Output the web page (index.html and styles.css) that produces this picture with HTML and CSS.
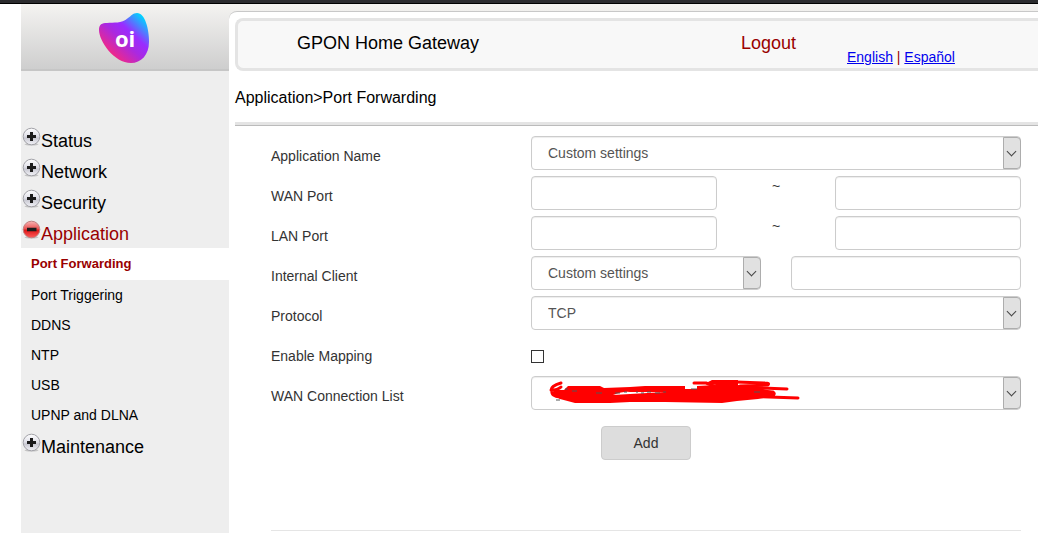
FILE: index.html
```html
<!DOCTYPE html>
<html lang="en">
<head>
    <meta charset="utf-8">
    <meta name="viewport" content="width=device-width, initial-scale=1">
    <title>GPON Home Gateway</title>
    <link rel="stylesheet" href="styles.css">
</head>
<body>

    <!-- shared icons -->
    <svg class="defs" width="0" height="0" aria-hidden="true">
        <defs>
            <linearGradient id="grey" x1="0" y1="0" x2="0" y2="1">
                <stop offset="0" stop-color="#fff"/>
                <stop offset="0.45" stop-color="#e2e2ea"/>
                <stop offset="0.6" stop-color="#c9c9d2"/>
                <stop offset="1" stop-color="#f5f5fa"/>
            </linearGradient>
            <linearGradient id="red" x1="0" y1="0" x2="0" y2="1">
                <stop offset="0" stop-color="#f9b5b5"/>
                <stop offset="0.45" stop-color="#ea5555"/>
                <stop offset="0.55" stop-color="#dd1a1a"/>
                <stop offset="1" stop-color="#ff5c5c"/>
            </linearGradient>
            <symbol id="plus" viewBox="0 0 19 19">
                <ellipse cx="9.5" cy="17.300" rx="7" ry="1.200" fill="#c4c4c4"/>
                <circle cx="9.500" cy="9.500" r="8.300" fill="url(#grey)" stroke="#a2a2a8"/>
                <path d="M9.500 5v9M5 9.500h9" stroke="#1c1c1c" stroke-width="3"/>
            </symbol>
            <symbol id="minus" viewBox="0 0 19 19">
                <ellipse cx="9.500" cy="17.300" rx="7" ry="1.200" fill="#c4c4c4"/>
                <circle cx="9.500" cy="9.500" r="8.300" fill="url(#red)" stroke="#c08080"/>
                <path d="M5 9.500h9.500" stroke="#1c1c1c" stroke-width="3.500"/>
            </symbol>
        </defs>
    </svg>

    <div class="topbar"></div>

    <div class="page">
        <aside class="sidebar">
            <div class="logo">
                <svg width="52" height="52" viewBox="0 0 52 52" role="img" aria-label="oi">
                    <defs>
                        <linearGradient id="oi" x1="0.2" y1="0.85" x2="0.9" y2="0.1">
                            <stop offset="0" stop-color="#f9287c"/>
                            <stop offset="0.4" stop-color="#aa29e0"/>
                            <stop offset="0.62" stop-color="#9a2cff"/>
                            <stop offset="1" stop-color="#00d2ff"/>
                        </linearGradient>
                    </defs>
                    <path fill="url(#oi)" d="M1 18C1 12 4 11 9 11C16 10 23 12 30 6C33 4 35 1 39 1C47 1 51 17 51 30C51 43 43 51 33 51C16 51 1 29 1 18Z"/>
                    <text class="logo_text" x="17" y="35">oi</text>
                </svg>
            </div>

            <ul class="menu">
                <li><a href="#" class="menu_item"><svg class="menu_icon"><use href="#plus"/></svg>Status</a></li>
                <li><a href="#" class="menu_item"><svg class="menu_icon"><use href="#plus"/></svg>Network</a></li>
                <li><a href="#" class="menu_item"><svg class="menu_icon"><use href="#plus"/></svg>Security</a></li>
                <li>
                    <a href="#" class="menu_item menu_item--open"><svg class="menu_icon"><use href="#minus"/></svg>Application</a>
                    <ul class="submenu">
                        <li><a href="#" class="submenu_item submenu_item--active">Port Forwarding</a></li>
                        <li><a href="#" class="submenu_item">Port Triggering</a></li>
                        <li><a href="#" class="submenu_item">DDNS</a></li>
                        <li><a href="#" class="submenu_item">NTP</a></li>
                        <li><a href="#" class="submenu_item">USB</a></li>
                        <li><a href="#" class="submenu_item">UPNP and DLNA</a></li>
                    </ul>
                </li>
                <li><a href="#" class="menu_item"><svg class="menu_icon"><use href="#plus"/></svg>Maintenance</a></li>
            </ul>
        </aside>

        <main class="main">
            <header class="header">
                <span class="title">GPON Home Gateway</span>
                <a href="#" class="logout">Logout</a>
                <span class="languages"><a href="#">English</a> | <a href="#">Español</a></span>
            </header>

            <div class="breadcrumb">Application&gt;Port Forwarding</div>

            <form class="form">
                <div class="row">
                    <label for="app">Application Name</label>
                    <div class="select">
                        <select id="app"><option>Custom settings</option></select>
                    </div>
                </div>
                <div class="row">
                    <label for="wan_start">WAN Port</label>
                    <div class="range">
                        <input type="text" id="wan_start">
                        <span class="tilde">~</span>
                        <input type="text" id="wan_end" aria-label="WAN Port end">
                    </div>
                </div>
                <div class="row">
                    <label for="lan_start">LAN Port</label>
                    <div class="range">
                        <input type="text" id="lan_start">
                        <span class="tilde">~</span>
                        <input type="text" id="lan_end" aria-label="LAN Port end">
                    </div>
                </div>
                <div class="row">
                    <label for="client">Internal Client</label>
                    <div class="pair">
                        <div class="select">
                            <select id="client"><option>Custom settings</option></select>
                        </div>
                        <input type="text" id="client_ip" aria-label="Internal Client address">
                    </div>
                </div>
                <div class="row">
                    <label for="protocol">Protocol</label>
                    <div class="select">
                        <select id="protocol"><option>TCP</option><option>UDP</option></select>
                    </div>
                </div>
                <div class="row">
                    <label for="mapping">Enable Mapping</label>
                    <input type="checkbox" id="mapping">
                </div>
                <div class="row">
                    <label for="connection">WAN Connection List</label>
                    <div class="select">
                        <select id="connection"><option></option></select>
                        <svg class="scribble" width="264" height="30" viewBox="0 0 264 30" aria-hidden="true">
                            <g fill="none" stroke="#f00" stroke-width="3" stroke-linecap="round" stroke-linejoin="round">
                                <path d="M21 6Q11 9 11 13Q18 13 21 10M12 14Q11 19 20 20"/>
                                <path d="M154 6H166L174 9M196 5L225 6Q230 6 228 8L200 9"/>
                                <path d="M200 10L247 12M200 14L233 15Q236 17 232 19M205 19L258 21"/>
                            </g>
                            <path fill="#f00" d="M28 9H60L64 11L90 10L105 9H145V12H157V9L176 8L166 6L172 3H198V8L215 10L232 14L234 19L218 22L197 24L182 26L125 25L90 25L70 26H35L20 22L12 17L14 13L24 13Z"/>
                            <path d="M73 18Q84 14 90 15H125L90 17ZM72 21L88 21" fill="#fff"/>
                            <path d="M25 12H28M32 14H37M56 16H62M75 16H80M84 15H87M96 15H98M101 16H104M107 15H111M115 16H120M123 15H126M151 12H157M214 15H220M16 23H20" fill="none" stroke="#555"/>
                        </svg>
                    </div>
                </div>
                <button type="button" class="add">Add</button>
            </form>
        </main>
    </div>

</body>
</html>
```

FILE: styles.css
```css
*,
*::before,
*::after {
    box-sizing: border-box;
}

body {
    margin: 0;
    font-family: Arial, 'Liberation Sans', sans-serif;
    font-size: 14px;
    color: #000;
    background-color: #fff;
}

ul {
    margin: 0;
    padding: 0;
    list-style: none;
}

a {
    text-decoration: none;
}

.defs {
    position: absolute;
}

.topbar {
    height: 4px;
    background-color: #2b2b2e;
    border-bottom: 1px solid #000;
}

.page {
    display: grid;
    grid-template-columns: 208px 1fr;
    min-height: calc(100vh - 4px);
    margin-left: 21px;
    background: #eee linear-gradient(#f4f3f1, #cdcdcd) no-repeat;
    background-size: 100% 67px;
}

/* sidebar */

.logo {
    height: 67px;
    padding: 8px 0 0 77px;
    border-bottom: 2px solid #c6c6c6;
}

.logo_text {
    font-family: 'Open Sans', sans-serif;
    font-size: 22px;
    font-weight: bold;
    fill: #fff;
}

.menu {
    padding-top: 53px;
}

.menu_item {
    display: flex;
    align-items: flex-start;
    height: 31px;
    padding: 3px 0 0 1px;
    font-size: 18px;
    line-height: 28px;
    color: #000;
}

.menu_item--open {
    color: #900;
}

.menu_icon {
    width: 19px;
    height: 19px;
}

.submenu_item {
    display: block;
    padding-left: 10px;
    line-height: 30px;
    color: #000;
}

.submenu_item--active {
    font-size: 13px;
    font-weight: bold;
    line-height: 32px;
    color: #900;
    background-color: #fff;
}

/* main area */

.main {
    margin-top: 7px;
    padding: 6px 0 2px 6px;
    background-color: #fff;
    border-top: 1px solid #c8c8c8;
    border-top-left-radius: 8px;
}

.header {
    display: grid;
    grid-template-columns: 444px 106px 1fr;
    height: 53px;
    padding-left: 59px;
    line-height: 44px;
    background-color: #f8f8f8;
    border: 3px solid #e4e4e4;
    border-right: 0;
    border-radius: 8px 0 0 8px;
}

.title,
.logout {
    font-size: 18px;
}

.logout {
    color: #900;
}

.languages {
    align-self: end;
    line-height: 22px;
    color: #900;
}

.languages a {
    color: #00e;
    text-decoration: underline;
}

.breadcrumb {
    height: 55px;
    font-size: 16px;
    line-height: 53px;
    border-bottom: 1px solid #bbb;
    box-shadow: inset 0 -3px #e4e4e4;
}

/* form */

.form {
    margin: 10px 17px 0 36px;
    padding-bottom: 70px;
    color: #333;
    border-bottom: 1px solid #e5e5e5;
}

.row {
    display: grid;
    grid-template-columns: 260px 1fr;
    height: 40px;
}

.row label {
    line-height: 40px;
}

.range {
    display: grid;
    grid-template-columns: 38fr 24fr 38fr;
}

.pair {
    display: grid;
    grid-template-columns: 1fr 1fr;
    gap: 30px;
}

.tilde {
    line-height: 20px;
    text-align: center;
}

input[type="text"],
select {
    width: 100%;
    height: 34px;
    margin: 0;
    padding: 0 16px;
    font: inherit;
    color: #555;
    background-color: #fff;
    border: 1px solid #ccc;
    border-radius: 4px;
    box-shadow: inset 0 1px 1px rgba(0, 0, 0, 0.075);
}

select {
    appearance: none;
}

.select {
    position: relative;
    height: 34px;
}

/* drop-down button */
.select::before {
    content: '';
    position: absolute;
    top: 1px;
    right: 0;
    width: 18px;
    height: 32px;
    background-color: #e1e1e1;
    border: 1px solid #adadad;
    border-radius: 0 4px 4px 0;
    pointer-events: none;
}

.select::after {
    content: '';
    position: absolute;
    top: 12px;
    right: 6px;
    width: 7px;
    height: 7px;
    border: solid #444;
    border-width: 0 1px 1px 0;
    transform: rotate(45deg);
    pointer-events: none;
}

.scribble {
    position: absolute;
    top: 1px;
    left: 9px;
    pointer-events: none;
}

input[type="checkbox"] {
    appearance: none;
    width: 13px;
    height: 13px;
    margin: 14px 0 0;
    background-color: #fff;
    border: 1px solid #333;
}

input[type="checkbox"]:checked {
    background-color: #333;
}

.add {
    display: block;
    width: 90px;
    height: 34px;
    margin: 10px 0 0 330px;
    font: inherit;
    color: #333;
    background-color: #ddd;
    border: 1px solid #ccc;
    border-radius: 4px;
}
```
